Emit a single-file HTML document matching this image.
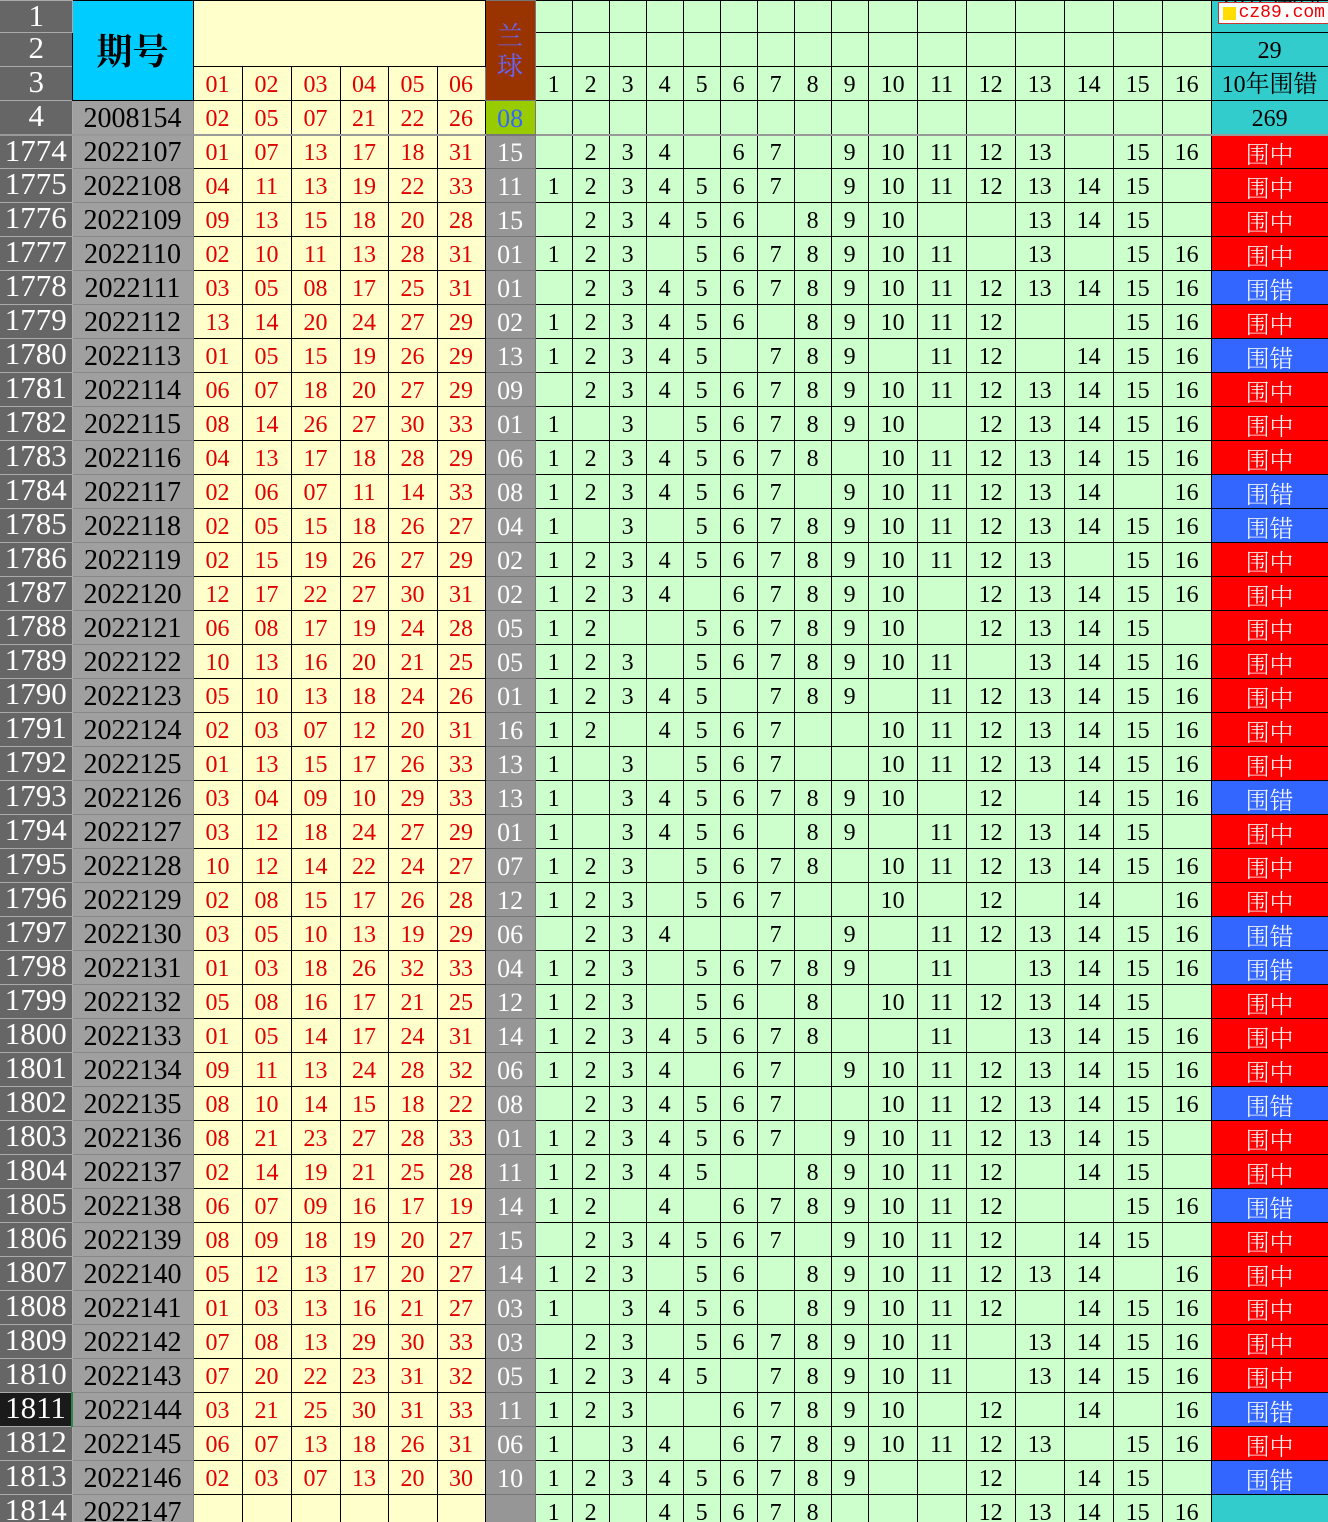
<!DOCTYPE html>
<html><head><meta charset="utf-8">
<style>
*{margin:0;padding:0;box-sizing:border-box}
html,body{width:1328px;height:1522px;overflow:hidden;background:#ccffcc}
table{border-collapse:collapse;table-layout:fixed;width:1328px;font-family:"Liberation Serif","Noto Serif CJK SC",serif;font-size:24px;color:#000}
td{border:1px solid #000;text-align:center;vertical-align:bottom;padding:0 0 1px 0;overflow:hidden;white-space:nowrap;line-height:28px}
tr{height:34px}
tr.h1{height:29px}
td.l{background:#666;color:#fff;border:1px solid #aaa;border-left:none;font-size:31px;vertical-align:top;line-height:30px;letter-spacing:-1px}
td.sel{background:#1a1a1a;border-right:2px solid #2a8a4a}
td.p{background:#a0a0a0;border-color:#888;font-size:28px}
td.r{background:#ffffcc;color:#e00000}
td.b{background:#969696;color:#fff;border-color:#777;font-size:26px}
td.g{background:#ccffcc}
td.z{background:#ff0000;color:#fff;font-family:"Noto Serif CJK SC","Noto Sans CJK SC",serif;font-weight:300}
td.c{background:#3366ff;color:#fff;font-family:"Noto Serif CJK SC","Noto Sans CJK SC",serif;font-weight:300}
td.t{background:#33cccc}
tr.d td:nth-child(1){background:#666;color:#fff;border:1px solid #aaa;border-left:none;font-size:31px;vertical-align:top;line-height:30px}
tr.d td:nth-child(2){background:#a0a0a0;border-color:#888;font-size:28px}
tr.d td:nth-child(n+3):nth-child(-n+8){background:#ffffcc;color:#e00000}
tr.d td:nth-child(9){background:#969696;color:#fff;border-color:#777;font-size:26px}
tr.d td:nth-child(n+10):nth-child(-n+25){background:#ccffcc}
tr.d td.sel{background:#1a1a1a;border-right:2px solid #2a8a4a}
tr.d td.z{background:#ff0000}
tr.d td.c{background:#3366ff}
tr.d td.t{background:#33cccc}
tr.r4 td{border-bottom:2px solid #999}
</style></head><body>
<table>
<colgroup>
<col style="width:72px"><col style="width:121px">
<col style="width:49px"><col style="width:49px"><col style="width:49px"><col style="width:48px"><col style="width:49px"><col style="width:48px">
<col style="width:50px">
<col style="width:37px"><col style="width:37px"><col style="width:37px"><col style="width:37px"><col style="width:37px"><col style="width:37px"><col style="width:37px"><col style="width:37px"><col style="width:37px">
<col style="width:49px"><col style="width:49px"><col style="width:49px"><col style="width:49px"><col style="width:49px"><col style="width:49px"><col style="width:49px">
<col style="width:117px">
</colgroup>
<tr class="h1"><td class="l">1</td><td rowspan="3" style="background:#00ccff;font-family:'Noto Serif CJK SC',serif;font-size:36px;font-weight:bold;vertical-align:middle;border-color:#000">期号</td><td class="r" colspan="6" rowspan="2"></td><td rowspan="3" style="background:#993300;color:#6666ff;font-family:'Noto Serif CJK SC',serif;font-size:26px;line-height:30px;vertical-align:middle;white-space:normal;border-color:#777">兰<br>球</td><td class="g"></td><td class="g"></td><td class="g"></td><td class="g"></td><td class="g"></td><td class="g"></td><td class="g"></td><td class="g"></td><td class="g"></td><td class="g"></td><td class="g"></td><td class="g"></td><td class="g"></td><td class="g"></td><td class="g"></td><td class="g"></td><td class="t" style="position:relative;font-family:'Noto Serif CJK SC',serif"><span style="position:absolute;left:8px;top:-8px;font-size:26px;line-height:30px">10年围错</span><span style="position:absolute;left:6px;top:1px;width:112px;height:22px;background:#fff;border:1px solid #c33;color:#e00;font-family:'Liberation Mono',monospace;font-size:18px;line-height:20px;text-align:left;padding-left:20px">cz89.com<i style="position:absolute;left:4px;top:4px;width:13px;height:13px;background:#ffdd00"></i></span></td></tr>
<tr><td class="l">2</td><td class="g"></td><td class="g"></td><td class="g"></td><td class="g"></td><td class="g"></td><td class="g"></td><td class="g"></td><td class="g"></td><td class="g"></td><td class="g"></td><td class="g"></td><td class="g"></td><td class="g"></td><td class="g"></td><td class="g"></td><td class="g"></td><td class="t">29</td></tr>
<tr><td class="l">3</td><td class="r">01</td><td class="r">02</td><td class="r">03</td><td class="r">04</td><td class="r">05</td><td class="r">06</td><td class="g">1</td><td class="g">2</td><td class="g">3</td><td class="g">4</td><td class="g">5</td><td class="g">6</td><td class="g">7</td><td class="g">8</td><td class="g">9</td><td class="g">10</td><td class="g">11</td><td class="g">12</td><td class="g">13</td><td class="g">14</td><td class="g">15</td><td class="g">16</td><td class="t" style="font-family:'Liberation Serif','Noto Serif CJK SC',serif">10年围错</td></tr>
<tr class="r4"><td class="l">4</td><td class="p">2008154</td><td class="r">02</td><td class="r">05</td><td class="r">07</td><td class="r">21</td><td class="r">22</td><td class="r">26</td><td style="background:#99cc00;color:#3366ff;font-size:26px;border-color:#777">08</td><td class="g"></td><td class="g"></td><td class="g"></td><td class="g"></td><td class="g"></td><td class="g"></td><td class="g"></td><td class="g"></td><td class="g"></td><td class="g"></td><td class="g"></td><td class="g"></td><td class="g"></td><td class="g"></td><td class="g"></td><td class="g"></td><td class="t">269</td></tr>
<tr class="d"><td>1774</td><td>2022107</td><td>01</td><td>07</td><td>13</td><td>17</td><td>18</td><td>31</td><td>15</td><td></td><td>2</td><td>3</td><td>4</td><td></td><td>6</td><td>7</td><td></td><td>9</td><td>10</td><td>11</td><td>12</td><td>13</td><td></td><td>15</td><td>16</td><td class="z">围中</td></tr>
<tr class="d"><td>1775</td><td>2022108</td><td>04</td><td>11</td><td>13</td><td>19</td><td>22</td><td>33</td><td>11</td><td>1</td><td>2</td><td>3</td><td>4</td><td>5</td><td>6</td><td>7</td><td></td><td>9</td><td>10</td><td>11</td><td>12</td><td>13</td><td>14</td><td>15</td><td></td><td class="z">围中</td></tr>
<tr class="d"><td>1776</td><td>2022109</td><td>09</td><td>13</td><td>15</td><td>18</td><td>20</td><td>28</td><td>15</td><td></td><td>2</td><td>3</td><td>4</td><td>5</td><td>6</td><td></td><td>8</td><td>9</td><td>10</td><td></td><td></td><td>13</td><td>14</td><td>15</td><td></td><td class="z">围中</td></tr>
<tr class="d"><td>1777</td><td>2022110</td><td>02</td><td>10</td><td>11</td><td>13</td><td>28</td><td>31</td><td>01</td><td>1</td><td>2</td><td>3</td><td></td><td>5</td><td>6</td><td>7</td><td>8</td><td>9</td><td>10</td><td>11</td><td></td><td>13</td><td></td><td>15</td><td>16</td><td class="z">围中</td></tr>
<tr class="d"><td>1778</td><td>2022111</td><td>03</td><td>05</td><td>08</td><td>17</td><td>25</td><td>31</td><td>01</td><td></td><td>2</td><td>3</td><td>4</td><td>5</td><td>6</td><td>7</td><td>8</td><td>9</td><td>10</td><td>11</td><td>12</td><td>13</td><td>14</td><td>15</td><td>16</td><td class="c">围错</td></tr>
<tr class="d"><td>1779</td><td>2022112</td><td>13</td><td>14</td><td>20</td><td>24</td><td>27</td><td>29</td><td>02</td><td>1</td><td>2</td><td>3</td><td>4</td><td>5</td><td>6</td><td></td><td>8</td><td>9</td><td>10</td><td>11</td><td>12</td><td></td><td></td><td>15</td><td>16</td><td class="z">围中</td></tr>
<tr class="d"><td>1780</td><td>2022113</td><td>01</td><td>05</td><td>15</td><td>19</td><td>26</td><td>29</td><td>13</td><td>1</td><td>2</td><td>3</td><td>4</td><td>5</td><td></td><td>7</td><td>8</td><td>9</td><td></td><td>11</td><td>12</td><td></td><td>14</td><td>15</td><td>16</td><td class="c">围错</td></tr>
<tr class="d"><td>1781</td><td>2022114</td><td>06</td><td>07</td><td>18</td><td>20</td><td>27</td><td>29</td><td>09</td><td></td><td>2</td><td>3</td><td>4</td><td>5</td><td>6</td><td>7</td><td>8</td><td>9</td><td>10</td><td>11</td><td>12</td><td>13</td><td>14</td><td>15</td><td>16</td><td class="z">围中</td></tr>
<tr class="d"><td>1782</td><td>2022115</td><td>08</td><td>14</td><td>26</td><td>27</td><td>30</td><td>33</td><td>01</td><td>1</td><td></td><td>3</td><td></td><td>5</td><td>6</td><td>7</td><td>8</td><td>9</td><td>10</td><td></td><td>12</td><td>13</td><td>14</td><td>15</td><td>16</td><td class="z">围中</td></tr>
<tr class="d"><td>1783</td><td>2022116</td><td>04</td><td>13</td><td>17</td><td>18</td><td>28</td><td>29</td><td>06</td><td>1</td><td>2</td><td>3</td><td>4</td><td>5</td><td>6</td><td>7</td><td>8</td><td></td><td>10</td><td>11</td><td>12</td><td>13</td><td>14</td><td>15</td><td>16</td><td class="z">围中</td></tr>
<tr class="d"><td>1784</td><td>2022117</td><td>02</td><td>06</td><td>07</td><td>11</td><td>14</td><td>33</td><td>08</td><td>1</td><td>2</td><td>3</td><td>4</td><td>5</td><td>6</td><td>7</td><td></td><td>9</td><td>10</td><td>11</td><td>12</td><td>13</td><td>14</td><td></td><td>16</td><td class="c">围错</td></tr>
<tr class="d"><td>1785</td><td>2022118</td><td>02</td><td>05</td><td>15</td><td>18</td><td>26</td><td>27</td><td>04</td><td>1</td><td></td><td>3</td><td></td><td>5</td><td>6</td><td>7</td><td>8</td><td>9</td><td>10</td><td>11</td><td>12</td><td>13</td><td>14</td><td>15</td><td>16</td><td class="c">围错</td></tr>
<tr class="d"><td>1786</td><td>2022119</td><td>02</td><td>15</td><td>19</td><td>26</td><td>27</td><td>29</td><td>02</td><td>1</td><td>2</td><td>3</td><td>4</td><td>5</td><td>6</td><td>7</td><td>8</td><td>9</td><td>10</td><td>11</td><td>12</td><td>13</td><td></td><td>15</td><td>16</td><td class="z">围中</td></tr>
<tr class="d"><td>1787</td><td>2022120</td><td>12</td><td>17</td><td>22</td><td>27</td><td>30</td><td>31</td><td>02</td><td>1</td><td>2</td><td>3</td><td>4</td><td></td><td>6</td><td>7</td><td>8</td><td>9</td><td>10</td><td></td><td>12</td><td>13</td><td>14</td><td>15</td><td>16</td><td class="z">围中</td></tr>
<tr class="d"><td>1788</td><td>2022121</td><td>06</td><td>08</td><td>17</td><td>19</td><td>24</td><td>28</td><td>05</td><td>1</td><td>2</td><td></td><td></td><td>5</td><td>6</td><td>7</td><td>8</td><td>9</td><td>10</td><td></td><td>12</td><td>13</td><td>14</td><td>15</td><td></td><td class="z">围中</td></tr>
<tr class="d"><td>1789</td><td>2022122</td><td>10</td><td>13</td><td>16</td><td>20</td><td>21</td><td>25</td><td>05</td><td>1</td><td>2</td><td>3</td><td></td><td>5</td><td>6</td><td>7</td><td>8</td><td>9</td><td>10</td><td>11</td><td></td><td>13</td><td>14</td><td>15</td><td>16</td><td class="z">围中</td></tr>
<tr class="d"><td>1790</td><td>2022123</td><td>05</td><td>10</td><td>13</td><td>18</td><td>24</td><td>26</td><td>01</td><td>1</td><td>2</td><td>3</td><td>4</td><td>5</td><td></td><td>7</td><td>8</td><td>9</td><td></td><td>11</td><td>12</td><td>13</td><td>14</td><td>15</td><td>16</td><td class="z">围中</td></tr>
<tr class="d"><td>1791</td><td>2022124</td><td>02</td><td>03</td><td>07</td><td>12</td><td>20</td><td>31</td><td>16</td><td>1</td><td>2</td><td></td><td>4</td><td>5</td><td>6</td><td>7</td><td></td><td></td><td>10</td><td>11</td><td>12</td><td>13</td><td>14</td><td>15</td><td>16</td><td class="z">围中</td></tr>
<tr class="d"><td>1792</td><td>2022125</td><td>01</td><td>13</td><td>15</td><td>17</td><td>26</td><td>33</td><td>13</td><td>1</td><td></td><td>3</td><td></td><td>5</td><td>6</td><td>7</td><td></td><td></td><td>10</td><td>11</td><td>12</td><td>13</td><td>14</td><td>15</td><td>16</td><td class="z">围中</td></tr>
<tr class="d"><td>1793</td><td>2022126</td><td>03</td><td>04</td><td>09</td><td>10</td><td>29</td><td>33</td><td>13</td><td>1</td><td></td><td>3</td><td>4</td><td>5</td><td>6</td><td>7</td><td>8</td><td>9</td><td>10</td><td></td><td>12</td><td></td><td>14</td><td>15</td><td>16</td><td class="c">围错</td></tr>
<tr class="d"><td>1794</td><td>2022127</td><td>03</td><td>12</td><td>18</td><td>24</td><td>27</td><td>29</td><td>01</td><td>1</td><td></td><td>3</td><td>4</td><td>5</td><td>6</td><td></td><td>8</td><td>9</td><td></td><td>11</td><td>12</td><td>13</td><td>14</td><td>15</td><td></td><td class="z">围中</td></tr>
<tr class="d"><td>1795</td><td>2022128</td><td>10</td><td>12</td><td>14</td><td>22</td><td>24</td><td>27</td><td>07</td><td>1</td><td>2</td><td>3</td><td></td><td>5</td><td>6</td><td>7</td><td>8</td><td></td><td>10</td><td>11</td><td>12</td><td>13</td><td>14</td><td>15</td><td>16</td><td class="z">围中</td></tr>
<tr class="d"><td>1796</td><td>2022129</td><td>02</td><td>08</td><td>15</td><td>17</td><td>26</td><td>28</td><td>12</td><td>1</td><td>2</td><td>3</td><td></td><td>5</td><td>6</td><td>7</td><td></td><td></td><td>10</td><td></td><td>12</td><td></td><td>14</td><td></td><td>16</td><td class="z">围中</td></tr>
<tr class="d"><td>1797</td><td>2022130</td><td>03</td><td>05</td><td>10</td><td>13</td><td>19</td><td>29</td><td>06</td><td></td><td>2</td><td>3</td><td>4</td><td></td><td></td><td>7</td><td></td><td>9</td><td></td><td>11</td><td>12</td><td>13</td><td>14</td><td>15</td><td>16</td><td class="c">围错</td></tr>
<tr class="d"><td>1798</td><td>2022131</td><td>01</td><td>03</td><td>18</td><td>26</td><td>32</td><td>33</td><td>04</td><td>1</td><td>2</td><td>3</td><td></td><td>5</td><td>6</td><td>7</td><td>8</td><td>9</td><td></td><td>11</td><td></td><td>13</td><td>14</td><td>15</td><td>16</td><td class="c">围错</td></tr>
<tr class="d"><td>1799</td><td>2022132</td><td>05</td><td>08</td><td>16</td><td>17</td><td>21</td><td>25</td><td>12</td><td>1</td><td>2</td><td>3</td><td></td><td>5</td><td>6</td><td></td><td>8</td><td></td><td>10</td><td>11</td><td>12</td><td>13</td><td>14</td><td>15</td><td></td><td class="z">围中</td></tr>
<tr class="d"><td>1800</td><td>2022133</td><td>01</td><td>05</td><td>14</td><td>17</td><td>24</td><td>31</td><td>14</td><td>1</td><td>2</td><td>3</td><td>4</td><td>5</td><td>6</td><td>7</td><td>8</td><td></td><td></td><td>11</td><td></td><td>13</td><td>14</td><td>15</td><td>16</td><td class="z">围中</td></tr>
<tr class="d"><td>1801</td><td>2022134</td><td>09</td><td>11</td><td>13</td><td>24</td><td>28</td><td>32</td><td>06</td><td>1</td><td>2</td><td>3</td><td>4</td><td></td><td>6</td><td>7</td><td></td><td>9</td><td>10</td><td>11</td><td>12</td><td>13</td><td>14</td><td>15</td><td>16</td><td class="z">围中</td></tr>
<tr class="d"><td>1802</td><td>2022135</td><td>08</td><td>10</td><td>14</td><td>15</td><td>18</td><td>22</td><td>08</td><td></td><td>2</td><td>3</td><td>4</td><td>5</td><td>6</td><td>7</td><td></td><td></td><td>10</td><td>11</td><td>12</td><td>13</td><td>14</td><td>15</td><td>16</td><td class="c">围错</td></tr>
<tr class="d"><td>1803</td><td>2022136</td><td>08</td><td>21</td><td>23</td><td>27</td><td>28</td><td>33</td><td>01</td><td>1</td><td>2</td><td>3</td><td>4</td><td>5</td><td>6</td><td>7</td><td></td><td>9</td><td>10</td><td>11</td><td>12</td><td>13</td><td>14</td><td>15</td><td></td><td class="z">围中</td></tr>
<tr class="d"><td>1804</td><td>2022137</td><td>02</td><td>14</td><td>19</td><td>21</td><td>25</td><td>28</td><td>11</td><td>1</td><td>2</td><td>3</td><td>4</td><td>5</td><td></td><td></td><td>8</td><td>9</td><td>10</td><td>11</td><td>12</td><td></td><td>14</td><td>15</td><td></td><td class="z">围中</td></tr>
<tr class="d"><td>1805</td><td>2022138</td><td>06</td><td>07</td><td>09</td><td>16</td><td>17</td><td>19</td><td>14</td><td>1</td><td>2</td><td></td><td>4</td><td></td><td>6</td><td>7</td><td>8</td><td>9</td><td>10</td><td>11</td><td>12</td><td></td><td></td><td>15</td><td>16</td><td class="c">围错</td></tr>
<tr class="d"><td>1806</td><td>2022139</td><td>08</td><td>09</td><td>18</td><td>19</td><td>20</td><td>27</td><td>15</td><td></td><td>2</td><td>3</td><td>4</td><td>5</td><td>6</td><td>7</td><td></td><td>9</td><td>10</td><td>11</td><td>12</td><td></td><td>14</td><td>15</td><td></td><td class="z">围中</td></tr>
<tr class="d"><td>1807</td><td>2022140</td><td>05</td><td>12</td><td>13</td><td>17</td><td>20</td><td>27</td><td>14</td><td>1</td><td>2</td><td>3</td><td></td><td>5</td><td>6</td><td></td><td>8</td><td>9</td><td>10</td><td>11</td><td>12</td><td>13</td><td>14</td><td></td><td>16</td><td class="z">围中</td></tr>
<tr class="d"><td>1808</td><td>2022141</td><td>01</td><td>03</td><td>13</td><td>16</td><td>21</td><td>27</td><td>03</td><td>1</td><td></td><td>3</td><td>4</td><td>5</td><td>6</td><td></td><td>8</td><td>9</td><td>10</td><td>11</td><td>12</td><td></td><td>14</td><td>15</td><td>16</td><td class="z">围中</td></tr>
<tr class="d"><td>1809</td><td>2022142</td><td>07</td><td>08</td><td>13</td><td>29</td><td>30</td><td>33</td><td>03</td><td></td><td>2</td><td>3</td><td></td><td>5</td><td>6</td><td>7</td><td>8</td><td>9</td><td>10</td><td>11</td><td></td><td>13</td><td>14</td><td>15</td><td>16</td><td class="z">围中</td></tr>
<tr class="d"><td>1810</td><td>2022143</td><td>07</td><td>20</td><td>22</td><td>23</td><td>31</td><td>32</td><td>05</td><td>1</td><td>2</td><td>3</td><td>4</td><td>5</td><td></td><td>7</td><td>8</td><td>9</td><td>10</td><td>11</td><td></td><td>13</td><td>14</td><td>15</td><td>16</td><td class="z">围中</td></tr>
<tr class="d"><td class="sel">1811</td><td>2022144</td><td>03</td><td>21</td><td>25</td><td>30</td><td>31</td><td>33</td><td>11</td><td>1</td><td>2</td><td>3</td><td></td><td></td><td>6</td><td>7</td><td>8</td><td>9</td><td>10</td><td></td><td>12</td><td></td><td>14</td><td></td><td>16</td><td class="c">围错</td></tr>
<tr class="d"><td>1812</td><td>2022145</td><td>06</td><td>07</td><td>13</td><td>18</td><td>26</td><td>31</td><td>06</td><td>1</td><td></td><td>3</td><td>4</td><td></td><td>6</td><td>7</td><td>8</td><td>9</td><td>10</td><td>11</td><td>12</td><td>13</td><td></td><td>15</td><td>16</td><td class="z">围中</td></tr>
<tr class="d"><td>1813</td><td>2022146</td><td>02</td><td>03</td><td>07</td><td>13</td><td>20</td><td>30</td><td>10</td><td>1</td><td>2</td><td>3</td><td>4</td><td>5</td><td>6</td><td>7</td><td>8</td><td>9</td><td></td><td></td><td>12</td><td></td><td>14</td><td>15</td><td></td><td class="c">围错</td></tr>
<tr class="d" style="height:34px"><td>1814</td><td>2022147</td><td></td><td></td><td></td><td></td><td></td><td></td><td></td><td>1</td><td>2</td><td></td><td>4</td><td>5</td><td>6</td><td>7</td><td>8</td><td></td><td></td><td></td><td>12</td><td>13</td><td>14</td><td>15</td><td>16</td><td class="t"></td></tr>
</table>
</body></html>
